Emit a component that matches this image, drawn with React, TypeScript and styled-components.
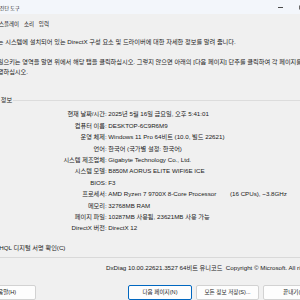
import React from "react";
import styled, { createGlobalStyle } from "styled-components";

const GlobalStyle = createGlobalStyle`
  html, body {
    margin: 0;
    padding: 0;
  }
  body {
    background: #f0f0f0;
    font-family: "Liberation Sans", "Noto Sans CJK KR", sans-serif;
  }
`;

const Viewport = styled.div`
  width: 300px;
  height: 300px;
  overflow: hidden;
  background: #f0f0f0;
`;

const Window = styled.div`
  margin-left: -33px;
  width: 366px;
  height: 300px;
  display: flex;
  flex-direction: column;
  color: #1a1a1a;
  font-size: 6.2px;
`;

const TitleBar = styled.div`
  height: 14px;
  flex: none;
  display: flex;
  align-items: center;
  padding-left: 15px;
  background: #f3f6fb;
  font-size: 5px;
  white-space: nowrap;
`;

const TitleText = styled.span`
  flex: 1;
`;

const CaptionButton = styled.div`
  width: 21px;
  height: 14px;
  display: flex;
  align-items: center;
  justify-content: center;
`;

const MinGlyph = styled.span`
  width: 5px;
  height: 1px;
  background: #4a4a4a;
`;

const MaxGlyph = styled.span`
  width: 5px;
  height: 5px;
  border: 1px solid #6a6a6a;
  border-radius: 1px;
  box-sizing: border-box;
`;

const TabStrip = styled.div`
  display: flex;
  padding: 6px 0 0 4.5px;
  font-size: 5.5px;
  white-space: nowrap;
`;

const Tab = styled.div`
  padding: 0 2.4px;
  line-height: 9px;
`;

const TabPage = styled.div`
  margin: 0 5px;
  padding: 8px 7px 4px;
  border-bottom: 1px solid #d9d9d9;
`;

const Para = styled.p<{ $gap?: number }>`
  margin: ${(p) => p.$gap ?? 0}px 0 0;
  line-height: 10px;
  white-space: nowrap;
`;

const Group = styled.fieldset`
  margin: 18px 0 0 -6px;
  padding: 3.3px 6px 5px;
  border: none;
  border-top: 1px solid #dcdcdc;
  min-width: 0;
`;

const Legend = styled.legend`
  margin-left: 2px;
  padding: 0 1px;
  line-height: 10px;
  white-space: nowrap;
`;

const InfoGrid = styled.div`
  display: grid;
  grid-template-columns: 127.7px 1fr;
  column-gap: 1.6px;
  grid-auto-rows: 11.4px;
  align-items: center;
  white-space: nowrap;
`;

const Label = styled.div`
  text-align: right;
`;

const Value = styled.div`
  display: flex;
`;

const ValuePart = styled.span<{ $width?: number }>`
  flex: none;
  ${(p) => (p.$width ? `width: ${p.$width}px;` : "")}
`;

const CheckRow = styled.label`
  display: flex;
  align-items: center;
  gap: 8.5px;
  margin-top: 4.3px;
  line-height: 10px;
  white-space: nowrap;
`;

const CheckBox = styled.span`
  width: 6px;
  height: 6px;
  flex: none;
  border: 1px solid #7a7a7a;
  border-radius: 1.5px;
  background: #fff;
  box-sizing: border-box;
`;

const VersionLine = styled.div`
  margin-top: 5px;
  padding-left: 139px;
  line-height: 10px;
  white-space: nowrap;
`;

const ButtonRow = styled.div`
  display: flex;
  gap: 4px;
  margin-top: 12px;
  padding: 0 7px 0 6px;
`;

const Button = styled.button<{ $primary?: boolean; $push?: boolean }>`
  width: ${(p) => (p.$primary ? 64 : 63)}px;
  height: 15px;
  flex: none;
  padding: 0;
  margin-left: ${(p) => (p.$push ? "auto" : "0")};
  font: inherit;
  font-size: 5.6px;
  color: #1a1a1a;
  background: #fdfdfd;
  border: 1px solid ${(p) => (p.$primary ? "#0067c0" : "#d2d2d2")};
  border-radius: 2px;
  white-space: nowrap;
`;

const rows: { label: string; value: string; extra?: string }[] = [
  { label: "현재 날짜/시간:", value: "2025년 5월 16일 금요일, 오후 5:41:01" },
  { label: "컴퓨터 이름:", value: "DESKTOP-6C9R6M9" },
  { label: "운영 체제:", value: "Windows 11 Pro 64비트 (10.0, 빌드 22621)" },
  { label: "언어:", value: "한국어 (국가별 설정: 한국어)" },
  { label: "시스템 제조업체:", value: "Gigabyte Technology Co., Ltd." },
  { label: "시스템 모델:", value: "B850M AORUS ELITE WIFI6E ICE" },
  { label: "BIOS:", value: "F3" },
  { label: "프로세서:", value: "AMD Ryzen 7 9700X 8-Core Processor", extra: "(16 CPUs), ~3.8GHz" },
  { label: "메모리:", value: "32768MB RAM" },
  { label: "페이지 파일:", value: "10287MB 사용됨, 23621MB 사용 가능" },
  { label: "DirectX 버전:", value: "DirectX 12" },
];

export default function App() {
  return (
    <Viewport>
      <GlobalStyle />
      <Window>
        <TitleBar>
          <TitleText>DirectX 진단 도구</TitleText>
          <CaptionButton>
            <MinGlyph />
          </CaptionButton>
          <CaptionButton>
            <MaxGlyph />
          </CaptionButton>
          <CaptionButton />
        </TitleBar>

        <TabStrip>
          <Tab>시스템</Tab>
          <Tab>디스플레이</Tab>
          <Tab>소리</Tab>
          <Tab>입력</Tab>
        </TabStrip>

        <TabPage>
          <Para>
            이 도구는 시스템에 설치되어 있는 DirectX 구성 요소 및 드라이버에 대한 자세한 정보를 알려 줍니다.
          </Para>
          <Para $gap={10}>
            문제를 일으키는 영역을 알면 위에서 해당 탭을 클릭하십시오. 그렇지 않으면 아래의 [다음 페이지] 단추를 클릭하여 각 페이지를 차
            <br />
            례로 진행하십시오.
          </Para>

          <Group>
            <Legend>시스템 정보</Legend>
            <InfoGrid>
              {rows.map((r) => (
                <React.Fragment key={r.label}>
                  <Label>{r.label}</Label>
                  <Value>
                    <ValuePart $width={r.extra ? 121.7 : undefined}>{r.value}</ValuePart>
                    {r.extra && <ValuePart>{r.extra}</ValuePart>}
                  </Value>
                </React.Fragment>
              ))}
            </InfoGrid>
          </Group>

          <CheckRow>
            <CheckBox />
            WHQL 디지털 서명 확인(C)
          </CheckRow>
        </TabPage>

        <VersionLine>
          DxDiag 10.00.22621.3527 64비트 유니코드&nbsp;&nbsp;Copyright © Microsoft. All rights reserved.
        </VersionLine>

        <ButtonRow>
          <Button>도움말(H)</Button>
          <Button $primary $push>
            다음 페이지(N)
          </Button>
          <Button>모든 정보 저장(S)...</Button>
          <Button>끝내기(X)</Button>
        </ButtonRow>
      </Window>
    </Viewport>
  );
}
